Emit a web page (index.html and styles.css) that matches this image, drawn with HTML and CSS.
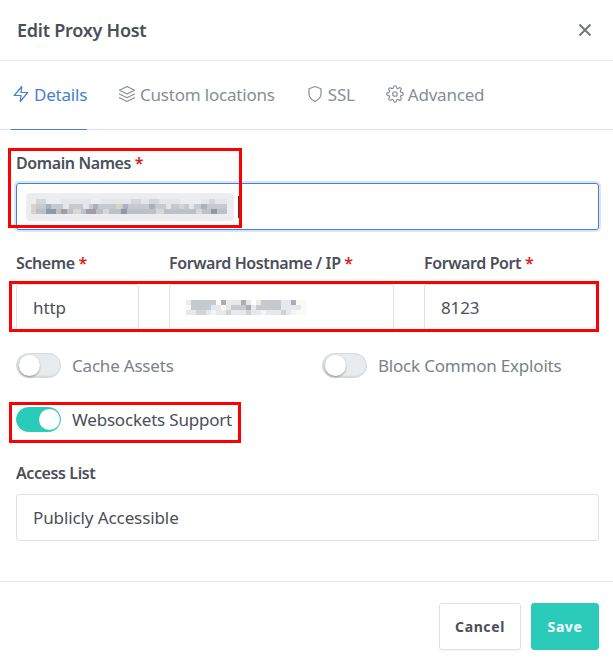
FILE: index.html
```html
<!DOCTYPE html>
<html lang="en">
<head>
<meta charset="utf-8">
<title>Edit Proxy Host</title>
<link rel="stylesheet" href="styles.css">
</head>
<body>
<div class="modal">
  <header class="modal-header">
    <h1 class="title">Edit Proxy Host</h1>
    <svg class="close" viewBox="0 0 14 14" width="14" height="14"><path d="M1.5 1.5l11 11M12.5 1.5l-11 11"/></svg>
  </header>
  <nav class="tabs">
    <a class="tab active"><svg class="ico" viewBox="0 0 24 24"><path d="M13 2 3 14h9l-1 8 10-12h-9l1-8z"/></svg>Details</a>
    <a class="tab"><svg class="ico" viewBox="0 0 24 24"><path d="M12 2 2 7l10 5 10-5-10-5z"/><path d="m2 12 10 5 10-5"/><path d="m2 17 10 5 10-5"/></svg>Custom locations</a>
    <a class="tab"><svg class="ico" viewBox="0 0 24 24"><path d="M12 22s8-4 8-10V5l-8-3-8 3v7c0 6 8 10 8 10z"/></svg>SSL</a>
    <a class="tab"><svg class="ico" viewBox="0 0 24 24"><circle cx="12" cy="12" r="3"/><path d="M19.4 15a1.65 1.65 0 0 0 .33 1.82l.06.06a2 2 0 1 1-2.83 2.83l-.06-.06a1.65 1.65 0 0 0-2.82 1.17V21a2 2 0 1 1-4 0v-.09A1.65 1.65 0 0 0 7.2 19.7l-.06.06a2 2 0 1 1-2.83-2.83l.06-.06a1.65 1.65 0 0 0-1.17-2.82H3a2 2 0 1 1 0-4h.09A1.65 1.65 0 0 0 4.3 7.2l-.06-.06a2 2 0 1 1 2.83-2.83l.06.06a1.65 1.65 0 0 0 2.82-1.17V3a2 2 0 1 1 4 0v.09a1.65 1.65 0 0 0 2.82 1.17l.06-.06a2 2 0 1 1 2.83 2.83l-.06.06a1.65 1.65 0 0 0 1.17 2.82H21a2 2 0 1 1 0 4h-.09a1.65 1.65 0 0 0-1.51 1z"/></svg>Advanced</a>
  </nav>
  <main class="body">
    <div class="field">
      <label class="label">Domain Names <span class="req">*</span></label>
      <div class="input focused">
        <span class="tag">
          <svg class="mosaic" width="196" height="15" viewBox="0 0 196 15" shape-rendering="crispEdges">
            <g fill="#e4e6e9"><rect x="30" y="0" width="30" height="5"/><rect x="70" y="0" width="80" height="5"/><rect x="170" y="0" width="26" height="5"/></g>
            <g fill="#d3d6da"><rect x="5" y="0" width="10" height="5"/><rect x="100" y="0" width="10" height="5"/><rect x="118" y="0" width="10" height="5"/><rect x="178" y="0" width="6" height="5"/></g>
            <rect x="0" y="5" width="196" height="5" fill="#c6cacf"/>
            <g fill="#d8d3cf"><rect x="0" y="5" width="5" height="10"/><rect x="85" y="5" width="5" height="5"/><rect x="148" y="5" width="5" height="5"/></g>
            <g fill="#a9b1bc"><rect x="15" y="5" width="5" height="5"/><rect x="62" y="5" width="5" height="5"/><rect x="92" y="5" width="5" height="5"/><rect x="118" y="5" width="6" height="5"/><rect x="170" y="5" width="6" height="5"/></g>
            <g fill="#e3e5e8"><rect x="32" y="5" width="6" height="5"/><rect x="52" y="5" width="6" height="5"/><rect x="135" y="5" width="5" height="5"/><rect x="158" y="5" width="5" height="5"/></g>
            <rect x="5" y="10" width="191" height="5" fill="#bcc1c7"/>
            <g fill="#a19ca5"><rect x="30" y="10" width="6" height="5"/><rect x="55" y="10" width="10" height="5"/></g>
            <g fill="#8f98a3"><rect x="15" y="10" width="10" height="5"/><rect x="90" y="10" width="6" height="5"/><rect x="180" y="10" width="6" height="5"/></g>
            <g fill="#d9d7d5"><rect x="42" y="10" width="8" height="5"/><rect x="72" y="10" width="6" height="5"/><rect x="125" y="10" width="8" height="5"/><rect x="165" y="10" width="6" height="5"/></g>
          </svg>
        </span>
        <span class="caret"></span>
      </div>
    </div>
    <div class="row-three">
      <div class="field">
        <label class="label">Scheme <span class="req">*</span></label>
        <div class="input">http</div>
      </div>
      <div class="field">
        <label class="label">Forward Hostname / IP <span class="req">*</span></label>
        <div class="input">
          <svg class="mosaic" width="120" height="15" viewBox="0 0 120 15" shape-rendering="crispEdges">
            <rect x="0" y="0" width="120" height="15" fill="#e6e8ea"/>
            <g fill="#fff"><rect x="30" y="0" width="5" height="5"/><rect x="65" y="0" width="5" height="5"/></g>
            <g fill="#c6cace"><rect x="5" y="0" width="25" height="10"/><rect x="45" y="5" width="20" height="5"/><rect x="70" y="0" width="25" height="10"/></g>
            <g fill="#f1ebe4"><rect x="0" y="0" width="5" height="5"/><rect x="40" y="0" width="5" height="5"/><rect x="70" y="0" width="5" height="5"/></g>
            <g fill="#fdf9f3"><rect x="0" y="5" width="5" height="5"/><rect x="110" y="0" width="10" height="15"/><rect x="35" y="5" width="5" height="5"/></g>
            <g fill="#a9aeb4"><rect x="35" y="0" width="5" height="5"/><rect x="55" y="0" width="5" height="5"/><rect x="105" y="0" width="5" height="5"/><rect x="60" y="5" width="5" height="5"/></g>
            <g fill="#dfe9f2"><rect x="25" y="5" width="5" height="5"/><rect x="110" y="5" width="5" height="5"/></g>
            <g fill="#d1d3d6"><rect x="10" y="10" width="10" height="5"/><rect x="40" y="10" width="5" height="5"/><rect x="60" y="10" width="5" height="5"/><rect x="95" y="10" width="5" height="5"/></g>
            <g fill="#f3f4f6"><rect x="25" y="10" width="5" height="5"/><rect x="75" y="10" width="5" height="5"/><rect x="105" y="10" width="5" height="5"/></g>
          </svg>
        </div>
      </div>
      <div class="field">
        <label class="label">Forward Port <span class="req">*</span></label>
        <div class="input">8123</div>
      </div>
    </div>
    <div class="switches">
      <div class="switch-item"><span class="switch"></span><span class="switch-label">Cache Assets</span></div>
      <div class="switch-item"><span class="switch"></span><span class="switch-label">Block Common Exploits</span></div>
      <div class="switch-item"><span class="switch on"></span><span class="switch-label dark">Websockets Support</span></div>
    </div>
    <div class="field">
      <label class="label access">Access List</label>
      <div class="input">Publicly Accessible</div>
    </div>
  </main>
  <footer class="modal-footer">
    <button class="btn">Cancel</button>
    <button class="btn primary">Save</button>
  </footer>
  <span class="mark mark-domain"></span>
  <span class="mark mark-row"></span>
  <span class="mark mark-ws"></span>
</div>
</body>
</html>
```
FILE: styles.css
```css
* { box-sizing: border-box; }
html, body { margin: 0; padding: 0; background: #fff; }
body { font-family: "Noto Sans", "Open Sans", sans-serif; color: #495057; font-size: 16px; letter-spacing: -0.1px; }
.modal { position: relative; width: 613px; height: 663px; overflow: hidden; }
.modal-header { height: 61px; border-bottom: 1px solid #e9ecef; display: flex; align-items: center; justify-content: space-between; padding: 0 21px 0 17px; }
.title { margin: 0; font-size: 18px; font-weight: 600; color: #495057; letter-spacing: -0.25px; }
.close { fill: none; stroke: #6e7377; stroke-width: 1.8; }
.tabs { height: 69px; border-bottom: 1px solid #dee2e6; display: flex; padding-left: 11px; gap: 30px; }
.tab { height: 69px; display: flex; align-items: center; gap: 4px; padding: 0 0 2px 1px; color: #868e96; border-bottom: 1px solid transparent; font-size: 17px; letter-spacing: -0.2px; white-space: nowrap; }
.tab .ico { width: 18px; height: 18px; fill: none; stroke: currentColor; stroke-width: 1.6; stroke-linecap: round; stroke-linejoin: round; flex: none; }
.tab.active { color: #467fcf; border-bottom-color: #467fcf; width: 76px; }
.body { padding: 23px 14px 0 16px; height: 452px; border-bottom: 1px solid #e9ecef; }
.field { margin-bottom: 22px; }
.label { display: block; font-weight: 600; font-size: 16px; line-height: 20px; margin-bottom: 10px; color: #495057; letter-spacing: -0.4px; white-space: nowrap; }
.req { color: #e01b1b; }
.input { height: 47px; border: 1px solid #dee2e6; border-radius: 3px; padding: 0 16px; display: flex; align-items: center; font-size: 17px; color: #495057; }
.input.focused { border-color: #467fcf; box-shadow: 0 0 0 2px rgba(70,127,207,.2); padding: 0 9px; }
.tag { width: 208px; height: 28px; background: #ebedf0; border-radius: 4px; display: flex; align-items: center; padding-left: 5px; }
.caret { width: 1.5px; height: 22px; background: #343a40; margin-left: 4px; }
.mosaic { display: block; filter: blur(.5px); }
.row-three { display: grid; grid-template-columns: 123px 225px 175px; gap: 30px; margin-top: 23px; }
.row-three .label { margin-bottom: 11px; }
.switches { display: grid; grid-template-columns: 306px 1fr; row-gap: 29px; margin-bottom: 31px; }
.switch-item { display: flex; align-items: center; gap: 11px; height: 25px; }
.switch { position: relative; width: 45px; height: 25px; border-radius: 13px; background: #e9ecef; border: 1px solid #d4d8dc; box-shadow: inset 1px -1px 2px rgba(0,0,0,.1); flex: none; }
.switch::after { content: ""; position: absolute; left: 2px; top: 1px; width: 21px; height: 21px; border-radius: 50%; background: #fff; box-shadow: 0 1px 2px rgba(0,0,0,.35); }
.switch.on { background: #2bcbba; border-color: #2bcbba; box-shadow: none; }
.switch.on::after { left: 22px; box-shadow: none; }
.switch-label { color: #7a8288; font-size: 17px; letter-spacing: -0.2px; white-space: nowrap; }
.switch-label.dark { color: #495057; }
.label.access { margin-bottom: 11px; }
.modal-footer { display: flex; justify-content: flex-end; gap: 10px; padding: 21px 14px 0 0; }
.btn { height: 47px; width: 82px; border: 1px solid #dee2e6; border-radius: 3px; background: #fff; color: #495057; font-family: inherit; font-size: 14px; font-weight: 700; letter-spacing: .6px; box-shadow: 0 1px 1px rgba(0,0,0,.05); }
.btn.primary { width: 68px; background: #2bcbba; border-color: #2bcbba; color: #fff; box-shadow: none; }
.mark { position: absolute; border: 3px solid #f00; }
.mark-domain { left: 8px; top: 148px; width: 234px; height: 80px; }
.mark-row { left: 9px; top: 281px; width: 590px; height: 51px; }
.mark-ws { left: 9px; top: 402px; width: 232px; height: 41px; }
```
